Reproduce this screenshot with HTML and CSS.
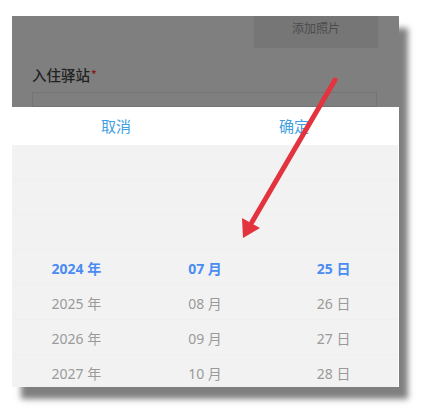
FILE: index.html
```html
<!DOCTYPE html>
<html lang="zh-CN">
<head>
<meta charset="utf-8">
<title>日期选择</title>
<link rel="stylesheet" href="styles.css">
</head>
<body>
<div class="shot">
  <div class="page">
    <div class="photo-row">
      <div class="photo-btn">添加照片</div>
    </div>
    <div class="field-label">入住驿站<span class="req">*</span></div>
    <div class="field-input"></div>
  </div>
  <div class="sheet">
    <div class="sheet-head">
      <span class="btn">取消</span>
      <span class="btn">确定</span>
    </div>
    <div class="picker">
      <div class="col">
        <div class="row"></div><div class="row"></div><div class="row"></div>
        <div class="row sel">2024 年</div>
        <div class="row">2025 年</div>
        <div class="row">2026 年</div>
        <div class="row">2027 年</div>
      </div>
      <div class="col">
        <div class="row"></div><div class="row"></div><div class="row"></div>
        <div class="row sel">07 月</div>
        <div class="row">08 月</div>
        <div class="row">09 月</div>
        <div class="row">10 月</div>
      </div>
      <div class="col">
        <div class="row"></div><div class="row"></div><div class="row"></div>
        <div class="row sel">25 日</div>
        <div class="row">26 日</div>
        <div class="row">27 日</div>
        <div class="row">28 日</div>
      </div>
    </div>
  </div>
</div>
<svg class="arrow" width="426" height="412" viewBox="0 0 426 412">
  <line x1="335" y1="80" x2="252" y2="222" stroke="#e2333f" stroke-width="5" stroke-linecap="round"/>
  <polygon points="243,238 242,218 260,228" fill="#e2333f"/>
</svg>
</body>
</html>
```

FILE: styles.css
```css
html, body {
  margin: 0;
  padding: 0;
  background: #ffffff;
}
body {
  width: 426px;
  height: 412px;
  overflow: hidden;
  position: relative;
  font-family: "Noto Sans", "Noto Sans CJK SC", sans-serif;
}
.shot {
  margin: 16px 0 0 12px;
  width: 387px;
  height: 371px;
  display: flex;
  flex-direction: column;
  overflow: hidden;
  box-shadow: 9px 12px 6px rgba(0, 0, 0, 0.5);
}
.page {
  height: 91px;
  flex: none;
  background: #7f7f7f;
  overflow: hidden;
  display: flex;
  flex-direction: column;
}
.photo-row {
  display: flex;
  justify-content: flex-end;
  padding-right: 21px;
}
.photo-btn {
  width: 124px;
  height: 32px;
  background: #767676;
  color: #4c4c4c;
  font-family: "Noto Sans CJK SC", sans-serif;
  font-size: 12px;
  line-height: 24px;
  text-align: center;
}
.field-label {
  margin: 16px 0 0 20px;
  font-family: "Noto Sans CJK SC", sans-serif;
  font-size: 14.5px;
  font-weight: 500;
  line-height: 20px;
  color: #222222;
}
.req {
  color: #8a1616;
  font-size: 12px;
  margin-left: 1px;
  vertical-align: 2px;
}
.field-input {
  margin: 7px 22px 0 20px;
  height: 40px;
  border: 1px solid #747474;
  box-sizing: border-box;
}
.sheet {
  width: 386px;
  flex: 1;
  display: flex;
  flex-direction: column;
  overflow: hidden;
}
.sheet-head {
  height: 38px;
  flex: none;
  background: #ffffff;
  display: flex;
  justify-content: space-between;
  align-items: center;
  padding: 0 89px 0 89px;
}
.btn {
  font-family: "Noto Sans CJK SC", sans-serif;
  font-size: 15px;
  color: #3fa0e4;
  line-height: 20px;
}
.picker {
  flex: 1;
  background: #f2f2f2;
  display: grid;
  grid-template-columns: 1fr 1fr 1fr;
  overflow: hidden;
}
.col {
  display: flex;
  flex-direction: column;
}
.row {
  height: 35px;
  flex: none;
  box-sizing: border-box;
  border-bottom: 1px solid #efefef;
  display: flex;
  align-items: center;
  justify-content: center;
  font-family: "Noto Sans", "Noto Sans CJK SC", sans-serif;
  font-size: 14px;
  color: #9a9a9a;
  padding-top: 1px;
}
.row.sel {
  color: #4a8cf2;
  font-weight: 700;
}
.arrow {
  position: absolute;
  left: 0;
  top: 0;
  pointer-events: none;
}
```
